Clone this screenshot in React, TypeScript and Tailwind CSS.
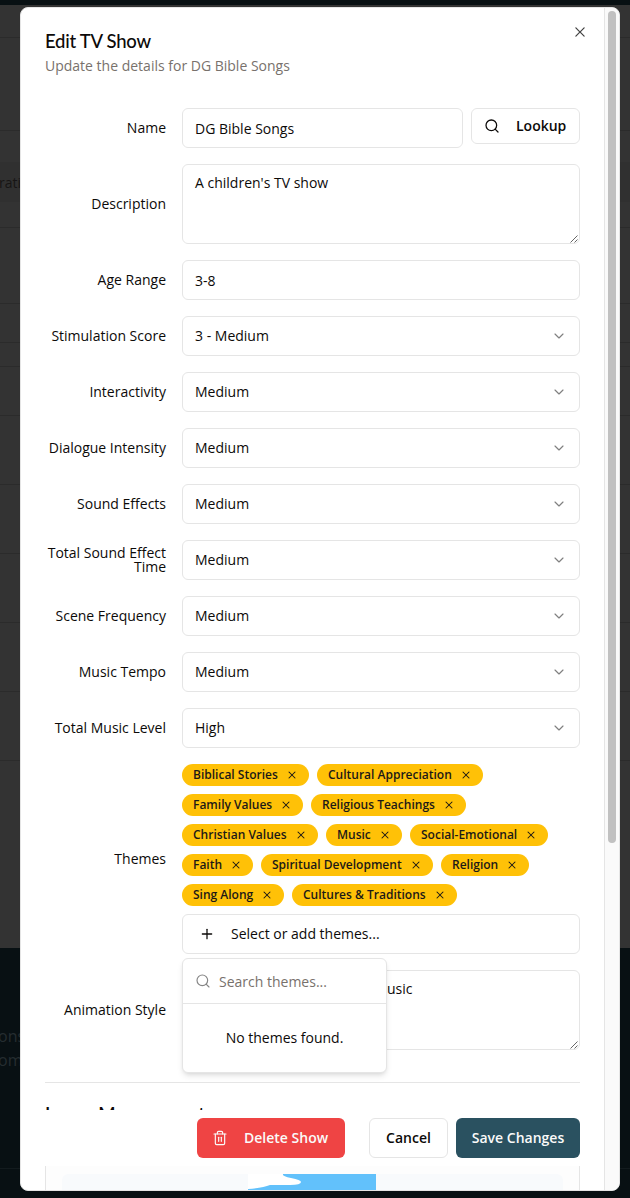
import React from 'react';
import { RxCross2 } from 'react-icons/rx';
import { Search, Plus, Trash2, X, ChevronDown } from 'lucide-react';

const labelCls = "w-[121px] shrink-0 text-right text-sm leading-[14px]";
const fieldCls = "flex h-10 flex-1 items-center rounded-md border border-[#e5e5e5] bg-white px-3 text-sm";

function Row({ label, children }: { label: string; children: React.ReactNode }) {
  return (
    <div className="flex items-center gap-4">
      <label className={labelCls}>{label}</label>
      {children}
    </div>
  );
}

function SelectField({ label, value }: { label: string; value: string }) {
  return (
    <Row label={label}>
      <button className={fieldCls + " justify-between"}>
        <span>{value}</span>
        <ChevronDown size={16} strokeWidth={1.75} className="text-[#808080]" />
      </button>
    </Row>
  );
}

function ResizeGrip() {
  return (
    <svg width="8" height="8" viewBox="0 0 8 8" className="absolute right-[1px] bottom-0" stroke="#555" strokeWidth="0.9">
      <path d="M0.5 7.5L7.5 0.5M4.5 7.5L7.5 4.5" />
    </svg>
  );
}

const selects: [string, string][] = [
  ['Stimulation Score', '3 - Medium'],
  ['Interactivity', 'Medium'],
  ['Dialogue Intensity', 'Medium'],
  ['Sound Effects', 'Medium'],
  ['Total Sound Effect Time', 'Medium'],
  ['Scene Frequency', 'Medium'],
  ['Music Tempo', 'Medium'],
  ['Total Music Level', 'High'],
];

const themes: [string, string][] = [
  ['Biblical Stories', 'w-[127px]'],
  ['Cultural Appreciation', 'w-[166px]'],
  ['Family Values', 'w-[121px]'],
  ['Religious Teachings', 'w-[155px]'],
  ['Christian Values', 'w-[136px]'],
  ['Music', 'w-[76px]'],
  ['Social-Emotional', 'w-[138px]'],
  ['Faith', 'w-[71px]'],
  ['Spiritual Development', 'w-[172px]'],
  ['Religion', 'w-[88px]'],
  ['Sing Along', 'w-[102px]'],
  ['Cultures & Traditions', 'w-[165px]'],
];

const tableRows = [
  'h-[76px]', 'h-[39px]', 'h-[24px]', 'h-[49px]', 'h-[69px]', 'h-[69px]', 'h-[69px]', 'h-[69px]', 'h-[69px]',
];

function Backdrop() {
  return (
    <div className="h-[1198px] w-[630px] overflow-hidden bg-[#081013]">
      <div className="h-[5px]" />
      <div className="h-[943px] overflow-hidden bg-[#333333]">
        <div className="h-[33px] border-b border-[#2b2b2b]" />
        <div className="h-[93px] border-b border-[#2b2b2b]" />
        <div className="h-[97px] border-b border-[#2b2b2b] pt-[31px]">
          <div className="flex h-10 items-center bg-[#303030]"><span className="-ml-px pt-px text-sm text-[#171514]">ration</span></div>
        </div>
        {tableRows.map((c, i) => <div key={i} className={c + " border-b border-[#2b2b2b]"} />)}
      </div>
      <div className="-ml-[2px] h-[221px] border-b border-[#131b1e] pt-[76px] text-base leading-6 text-[#252d30]">
        <div>ons</div>
        <div>om</div>
      </div>
    </div>
  );
}

export default function App() {
  return (
    <div className="relative h-[1198px] w-[630px] overflow-hidden font-['Open_Sans',sans-serif] text-[#0c0a09]">
      <Backdrop />
      <div className="absolute left-5 top-[7px] flex h-[1184px] w-[600px] overflow-hidden rounded-lg border border-[#e5e5e5] bg-white">
        <main className="relative min-w-0 flex-1 px-6 pt-6">
          <h2 className="font-[Lato,sans-serif] text-[18.5px] leading-[18px] font-medium tracking-[-0.25px]">Edit TV Show</h2>
          <p className="mt-1.5 text-sm leading-5 text-[#78716c]">Update the details for DG Bible Songs</p>
          <button className="absolute right-4 top-4 text-[#444]"><RxCross2 size={16} /></button>

          <div className="mt-8 flex flex-col gap-4">
            <Row label="Name">
              <div className="flex flex-1 items-start gap-2">
                <div className={fieldCls + " pt-px"}>DG Bible Songs</div>
                <button className="flex h-9 w-[109px] items-center gap-4 rounded-md border border-[#e5e5e5] pl-3 text-sm font-semibold"><Search size={16} strokeWidth={1.9} />Lookup</button>
              </div>
            </Row>
            <Row label="Description">
              <div className="relative h-20 flex-1 rounded-md border border-[#e5e5e5] px-3 py-2 text-sm leading-5">A children's TV show<ResizeGrip /></div>
            </Row>
            <Row label="Age Range"><div className={fieldCls + " pt-px"}>3-8</div></Row>
            {selects.map(([l, v]) => <SelectField key={l} label={l} value={v} />)}
            <Row label="Themes">
              <div className="relative flex-1">
                <div className="mb-2 flex flex-wrap gap-2">
                  {themes.map(([t, w]) => (
                    <span key={t} className={w + " flex h-[22px] items-center justify-between whitespace-nowrap rounded-full bg-[#ffc107] pl-[11px] pr-[11px] text-xs font-semibold text-[#1c1917]"}>
                      {t}<X size={12} strokeWidth={2.1} />
                    </span>
                  ))}
                </div>
                <button className="flex h-10 w-full items-center gap-4 rounded-md border border-[#e5e5e5] px-4 text-sm"><Plus size={16} strokeWidth={1.9} />Select or add themes...</button>
                <div className="absolute left-0 top-[194px] z-10 h-[115px] w-[205px] rounded-md border border-[#e5e5e5] bg-white text-sm shadow-md">
                  <div className="flex h-[45px] items-center gap-2 border-b border-[#e5e5e5] px-3 text-[#78716c]"><Search size={16} strokeWidth={1.75} className="text-[#858585]" /><span className="pt-0.5">Search themes...</span></div>
                  <div className="flex h-[68px] items-center justify-center">No themes found.</div>
                </div>
              </div>
            </Row>
            <Row label="Animation Style">
              <div className="relative h-20 flex-1 rounded-md border border-[#e5e5e5] py-2 pl-[204px] text-sm leading-5">usic<ResizeGrip /></div>
            </Row>
          </div>

          <div className="mt-8 h-[28px] overflow-hidden border-t border-[#e5e5e5] pt-[17px]">
            <h3 className="font-[Lato,sans-serif] text-[18.5px] leading-7 font-semibold tracking-[-0.1px]">Image Management</h3>
          </div>
          <footer className="flex h-14 items-start justify-end pt-2 text-sm font-semibold">
            <button className="mr-6 flex h-10 w-[148px] items-center gap-4 rounded-md bg-[#ef4444] pl-[15px] text-[#fafaf9]"><Trash2 size={16} strokeWidth={1.75} />Delete Show</button>
            <button className="mr-2 h-10 w-[79px] rounded-md border border-[#e5e5e5]">Cancel</button>
            <button className="h-10 w-[124px] rounded-md bg-[#2a5160] text-[#fafaf9]">Save Changes</button>
          </footer>
          <div className="h-6 border-x border-[#e5e5e5] bg-[#fdfdfd] px-4 pt-2">
            <div className="flex h-4 justify-center rounded-t-md bg-[#f8fafc] pr-0.5">
              <svg width="128" height="16" viewBox="0 0 128 16" fill="white"><rect width="128" height="16" fill="#62c1fb" /><path d="M0 0H35Q34 2 43 4Q53 6 53 8Q53 11 42 11Q31 11 22 11Q15 14 0 15Z" /></svg>
            </div>
          </div>
        </main>
        <div className="w-[15px] border-l border-[#e5e5e5] bg-[#fafafa] pl-[3px] pt-[3px]">
          <div className="h-[832px] w-2 rounded bg-[#c1c1c1]" />
        </div>
      </div>
    </div>
  );
}
